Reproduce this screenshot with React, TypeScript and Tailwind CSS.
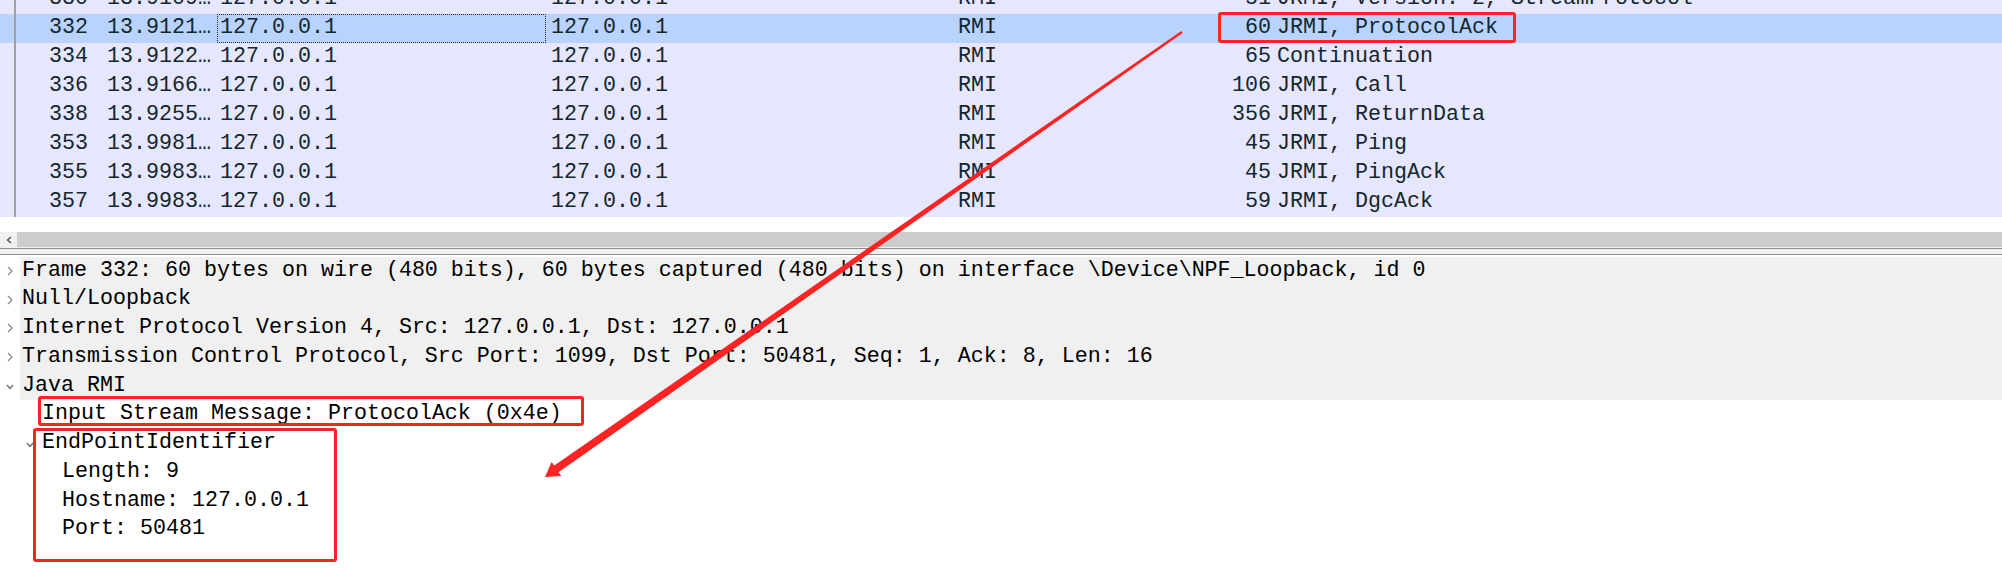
import React from "react";

type Packet = {
  no: string;
  time: string;
  len: string;
  info: string;
  selected?: boolean;
};

const packets: Packet[] = [
  { no: "330", time: "13.9109…", len: "51", info: "JRMI, Version: 2, StreamProtocol" },
  { no: "332", time: "13.9121…", len: "60", info: "JRMI, ProtocolAck", selected: true },
  { no: "334", time: "13.9122…", len: "65", info: "Continuation" },
  { no: "336", time: "13.9166…", len: "106", info: "JRMI, Call" },
  { no: "338", time: "13.9255…", len: "356", info: "JRMI, ReturnData" },
  { no: "353", time: "13.9981…", len: "45", info: "JRMI, Ping" },
  { no: "355", time: "13.9983…", len: "45", info: "JRMI, PingAck" },
  { no: "357", time: "13.9983…", len: "59", info: "JRMI, DgcAck" },
];

type TreeItem = {
  level: number;
  text: string;
  chevron?: "right" | "down";
  shaded?: boolean;
};

const tree: TreeItem[] = [
  {
    level: 0,
    chevron: "right",
    shaded: true,
    text: "Frame 332: 60 bytes on wire (480 bits), 60 bytes captured (480 bits) on interface \\Device\\NPF_Loopback, id 0",
  },
  { level: 0, chevron: "right", shaded: true, text: "Null/Loopback" },
  {
    level: 0,
    chevron: "right",
    shaded: true,
    text: "Internet Protocol Version 4, Src: 127.0.0.1, Dst: 127.0.0.1",
  },
  {
    level: 0,
    chevron: "right",
    shaded: true,
    text: "Transmission Control Protocol, Src Port: 1099, Dst Port: 50481, Seq: 1, Ack: 8, Len: 16",
  },
  { level: 0, chevron: "down", shaded: true, text: "Java RMI" },
  { level: 1, text: "Input Stream Message: ProtocolAck (0x4e)" },
  { level: 1, chevron: "down", text: "EndPointIdentifier" },
  { level: 2, text: "Length: 9" },
  { level: 2, text: "Hostname: 127.0.0.1" },
  { level: 2, text: "Port: 50481" },
];

function Chevron({ dir }: { dir: "right" | "down" }) {
  if (dir === "right")
    return (
      <svg width="6" height="10" viewBox="0 0 6 10" className="ml-[7px]">
        <polyline points="1,1 5,5 1,9" fill="none" stroke="#8a8a8a" strokeWidth="1.3" />
      </svg>
    );
  return (
    <svg width="8" height="6" viewBox="0 0 8 6" className="ml-[6px] mt-[3px]">
      <polyline points="1,1 4,4.5 7,1" fill="none" stroke="#6e6e6e" strokeWidth="1.4" />
    </svg>
  );
}

function PacketRow({ p }: { p: Packet }) {
  return (
    <div className={`flex h-[29px] items-stretch whitespace-nowrap ${p.selected ? "bg-[#b9d3fc]" : ""}`}>
      <div className="w-[14px] shrink-0" />
      <div className="w-[80px] shrink-0 border-l-2 border-[#a0a0a0] flex items-center justify-end pr-[6px]">
        {p.no}
      </div>
      <div className="w-[123px] shrink-0 flex items-center pl-[13px]">{p.time}</div>
      <div
        className={`w-[329px] shrink-0 flex items-center ${
          p.selected ? "border border-dotted border-[#2a2a2a] pl-[2px]" : "pl-[3px]"
        }`}
      >
        127.0.0.1
      </div>
      <div className="w-[409px] shrink-0 flex items-center pl-[5px]">127.0.0.1</div>
      <div className="w-[195px] shrink-0 flex items-center pl-[3px]">RMI</div>
      <div className="w-[124px] shrink-0 flex items-center justify-end pr-[3px]">{p.len}</div>
      <div className="flex-1 flex items-center pl-[3px]">{p.info}</div>
    </div>
  );
}

function TreeRow({ item }: { item: TreeItem }) {
  return (
    <div className="flex h-[28.75px] whitespace-nowrap">
      <div style={{ width: item.level * 20 }} className="shrink-0" />
      <div className="w-[20px] shrink-0 flex items-center">
        {item.chevron && <Chevron dir={item.chevron} />}
      </div>
      <div className={`flex-1 flex items-center pl-[2px] ${item.shaded ? "bg-[#f0f0f0]" : ""}`}>
        {item.text}
      </div>
    </div>
  );
}

export default function App() {
  return (
    <div className="relative w-[2002px] h-[583px] overflow-hidden bg-white font-['Liberation_Mono',monospace] text-[21.67px]">
      {/* packet list */}
      <div className="h-[232px] overflow-hidden text-[#12272e]">
        <div className="-mt-[15px] bg-[#e6e6fc]">
          {packets.map((p) => (
            <PacketRow key={p.no} p={p} />
          ))}
        </div>
      </div>

      {/* horizontal scrollbar */}
      <div className="flex h-[15px]">
        <div className="w-[17px] bg-[#f0f0f0] flex items-center justify-center">
          <svg width="6" height="8" viewBox="0 0 6 8">
            <polyline points="5,1 1.5,4 5,7" fill="none" stroke="#505050" strokeWidth="1.4" />
          </svg>
        </div>
        <div className="flex-1 bg-[#cdcdcd]" />
      </div>

      {/* splitter */}
      <div className="h-[1px] bg-[#f0f0f0]" />
      <div className="h-[7px] border-y border-[#8c8c8c] bg-[#f0f0f0]" />

      {/* packet details */}
      <div className="pt-[1.6px] text-black">
        {tree.map((item, i) => (
          <TreeRow key={i} item={item} />
        ))}
      </div>

      {/* annotations */}
      <div className="absolute left-[1218px] top-[12px] w-[298px] h-[31px] border-[3px] border-[#fb2323] rounded-[3px]" />
      <div className="absolute left-[38px] top-[396px] w-[546px] h-[30px] border-[3px] border-[#fb2323] rounded-[3px]" />
      <div className="absolute left-[33px] top-[428px] w-[304px] h-[134px] border-[3px] border-[#fb2323] rounded-[3px]" />
      <svg className="absolute left-0 top-0 pointer-events-none" width="2002" height="583">
        <polygon
          points="1182.7,33.0 558.5,472.3 561.4,476.0 545,477 551.6,462.0 554.3,465.6 1181.3,31.0"
          fill="#fb2323"
        />
      </svg>
    </div>
  );
}
